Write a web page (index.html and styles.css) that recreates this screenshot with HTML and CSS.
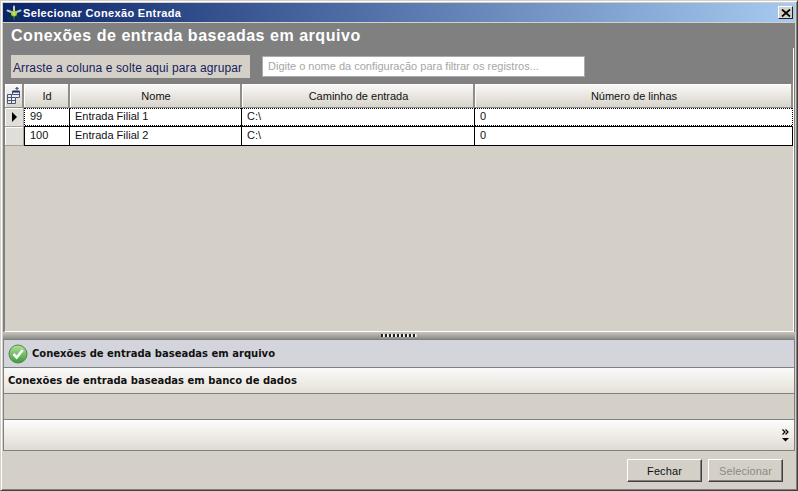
FILE: index.html
```html
<!DOCTYPE html>
<html lang="pt">
<head>
<meta charset="utf-8">
<title>Selecionar Conexão Entrada</title>
<link rel="stylesheet" href="styles.css">
</head>
<body>
<div class="window">
  <div class="titlebar">
    <svg class="app-icon" width="16" height="16" viewBox="0 0 16 16">
      <g stroke-width="2" stroke-linecap="round">
        <path d="M8 8L3 14" stroke="#0d3a3a"/><path d="M8 8L13 14" stroke="#0d3a3a"/>
        <path d="M8 8L1.500 5.500" stroke="#b9c6b8"/><path d="M8 8L14.500 5.500" stroke="#b9c6b8"/>
        <path d="M8 8V1.500" stroke="#c9d3c4"/>
        <path d="M8 8V14" stroke="#1f5a4a"/>
      </g>
      <circle cx="8" cy="8.500" r="3" fill="#9ccc3c"/>
      <circle cx="8" cy="8.500" r="1.500" fill="#c6e85a"/>
    </svg>
    <span class="title-text">Selecionar Conexão Entrada</span>
    <button class="close-btn" aria-label="Fechar">
      <svg width="10" height="8" viewBox="0 0 10 8"><path d="M1 .5L9 7.500M9 .5L1 7.500" fill="none" stroke="#000" stroke-width="1.800"/></svg>
    </button>
  </div>
  <div class="content">
    <div class="grid-panel">
      <div class="panel-head">
        <h1 class="panel-title">Conexões de entrada baseadas em arquivo</h1>
        <div class="tools">
          <div class="group-box">Arraste a coluna e solte aqui para agrupar</div>
          <div class="filter-box">Digite o nome da configuração para filtrar os registros...</div>
        </div>
      </div>
      <div class="grid">
        <div class="row head-row">
          <div class="h-cell c0">
            <svg width="15" height="17" viewBox="0 0 15 17">
              <path d="M1.500 7.500h5v-3h7v6h-4v6h-8z" fill="#e8ebf0" stroke="#4a5672"/>
              <path d="M1.500 10.500h8M1.500 13.500h8M5.500 7.500v9M6.500 7.500h7" fill="none" stroke="#4a5672"/>
              <path d="M6.500 4.500h7" stroke="#1a2a66" stroke-width="2" fill="none"/>
              <path d="M11 3V.5M9.500 2l1.500-1.500L12.500 2" fill="none" stroke="#1a2a66"/>
            </svg>
          </div>
          <div class="h-cell c1">Id</div>
          <div class="h-cell c2">Nome</div>
          <div class="h-cell c3">Caminho de entrada</div>
          <div class="h-cell c4">Número de linhas</div>
        </div>
        <div class="row data-row current">
          <div class="ind c0"><span class="arrow"></span></div>
          <div class="d-cell c1">99</div>
          <div class="d-cell c2">Entrada Filial 1</div>
          <div class="d-cell c3">C:\</div>
          <div class="d-cell c4">0</div>
        </div>
        <div class="row data-row">
          <div class="ind c0"></div>
          <div class="d-cell c1">100</div>
          <div class="d-cell c2">Entrada Filial 2</div>
          <div class="d-cell c3">C:\</div>
          <div class="d-cell c4">0</div>
        </div>
        <div class="grid-empty"></div>
      </div>
    </div>
    <div class="splitter"><span class="grip"></span></div>
    <div class="nav">
      <div class="nav-item selected">
        <svg class="check" width="20" height="20" viewBox="0 0 20 20">
          <defs>
            <linearGradient id="chk" x1="0" y1="0" x2="0" y2="1">
              <stop offset="0" stop-color="#b4e09c"/><stop offset="1" stop-color="#3d9a3a"/>
            </linearGradient>
          </defs>
          <circle cx="10" cy="10" r="9" fill="url(#chk)" stroke="#4d8a48"/>
          <path d="M5.500 10l3.200 3.500 6-7.500" fill="none" stroke="#fff" stroke-width="2.600"/>
        </svg>
        <span>Conexões de entrada baseadas em arquivo</span>
      </div>
      <div class="nav-item plain"><span>Conexões de entrada baseadas em banco de dados</span></div>
      <div class="nav-empty"></div>
      <div class="nav-overflow">
        <span class="chev">
          <svg width="7" height="13" viewBox="0 0 7 13">
            <path d="M0.500 0.500L3 3 .5 5.500M3.500 0.500L6 3 3.500 5.500" fill="none" stroke="#000" stroke-width="1.200"/>
            <path d="M0 9h7l-3.500 3.500z" fill="#000"/>
          </svg>
        </span>
      </div>
    </div>
    <div class="footer">
      <button class="btn">Fechar</button>
      <button class="btn disabled">Selecionar</button>
    </div>
  </div>
</div>
</body>
</html>
```

FILE: styles.css
```css
* { box-sizing: border-box; }
html, body { margin: 0; padding: 0; }
body { width: 798px; height: 491px; overflow: hidden; background: #d4d0c8; font-family: "Liberation Sans", Arial, sans-serif; }

.window {
  width: 798px; height: 491px; display: flex; flex-direction: column;
  background: #d4d0c8;
  border-top: 1px solid #d4d0c8;
  border-left: 1px solid #d4d0c8;
  border-right: 1px solid #404040;
  border-bottom: 1px solid #404040;
  box-shadow: inset 1px 1px 0 #fff, inset -1px -1px 0 #808080;
  padding: 2px 2px 1px 2px;
}

.titlebar {
  height: 19px; flex: none; display: flex; align-items: center;
  padding: 0 2px 0 3px;
  background: linear-gradient(to right, #0a246a, #a6caf0);
}
.app-icon { flex: none; margin-right: 1px; }
.title-text { flex: 1; color: #fff; font: bold 11px "Liberation Sans", Arial, sans-serif; letter-spacing: 0.35px; }
.close-btn {
  width: 15px; height: 13px; padding: 0; display: flex; align-items: center; justify-content: center;
  background: #d4d0c8; border: 1px solid; border-color: #fff #202020 #202020 #fff;
}

.content { flex: 1; display: flex; flex-direction: column; padding-top: 1px; min-height: 0; }

.grid-panel { height: 309px; flex: none; display: flex; flex-direction: column; background: #808080; }
.panel-head {
  height: 61px; flex: none; padding: 3px 0 0 8px;
  background: #808080 linear-gradient(#fff, #fff) no-repeat right 1px bottom / 1px 36px;
}
.panel-title { margin: 0; color: #fff; font: bold 16px/20px "Liberation Sans", Arial, sans-serif; letter-spacing: 0.53px; }
.tools { display: flex; align-items: flex-start; margin-top: 9px; }
.group-box {
  width: 239px; height: 23px; background: #d4d0c8; color: #14205e;
  font-size: 12px; letter-spacing: 0.12px; line-height: 26px; padding-left: 2px; white-space: nowrap;
}
.filter-box {
  width: 323px; height: 21px; margin-left: 12px; margin-top: 1px; background: #fff;
  border: 1px solid #a5acb2; color: #a6a6a6; font-size: 11px; line-height: 19px; padding-left: 5px;
}

.grid {
  flex: 1; display: flex; flex-direction: column; min-height: 0;
  margin: 0 1px 0 1px;
  border-left: 1px solid #808080;
  border-right: 1px solid #fff;
  border-bottom: 1px solid #fff;
}
.row { display: flex; flex: none; }
.c0 { width: 19px; }
.c1 { width: 46px; }
.c2 { width: 172px; }
.c3 { width: 233px; }
.c4 { width: 318px; }

.head-row { height: 24px; }
.h-cell {
  display: flex; align-items: center; justify-content: center;
  font-size: 11px; color: #111; padding-left: 2px;
  background: linear-gradient(to bottom, #fbfafa, #e6e3dd 60%, #d8d5ce);
  border-right: 2px solid #8f8d88;
  border-bottom: 1px solid #8f8d88;
  box-shadow: inset 1px 1px 0 #fff;
}
.h-cell.c0 { padding-left: 0; }

.data-row { height: 19px; }
.ind {
  display: flex; align-items: center; justify-content: center;
  background: #e0ded8;
  border-right: 1px solid #a6a39c; border-bottom: 1px solid #a6a39c;
  box-shadow: inset 1px 1px 0 #fff;
}
.arrow { width: 0; height: 0; border-left: 5px solid #000; border-top: 5px solid transparent; border-bottom: 5px solid transparent; }
.d-cell {
  background: #fff; color: #111; font-size: 11px; line-height: 16px; padding-left: 5px;
  border-right: 1px solid #000; border-bottom: 1px solid #000;
}
.d-cell.c1 { border-left: 1px solid #000; }
.current .d-cell {
  background:
    repeating-linear-gradient(to right, #000 0 1px, #fff 1px 2px) top / 100% 1px no-repeat,
    repeating-linear-gradient(to right, #000 0 1px, #fff 1px 2px) bottom / 100% 1px no-repeat,
    #fff;
}
.current .d-cell.c1 { border-left-style: dotted; }
.current .d-cell.c4 { border-right-style: dotted; }

.grid-empty { flex: 1; background: #d4d0c8; }

.splitter {
  height: 7px; flex: none; display: flex; justify-content: center; align-items: flex-start;
  background: linear-gradient(to bottom, #c8c5be, #8e8c88);
  padding-top: 2px;
}
.grip {
  width: 36px; height: 3px;
  background: repeating-linear-gradient(to right, #222 0, #222 2px, #fff 2px, #fff 3px, #d8d8d8 3px, #d8d8d8 4px);
}

.nav { height: 112px; flex: none; display: flex; flex-direction: column; border: 1px solid #808080; border-top: 0; }
.nav-item {
  display: flex; align-items: center; font-weight: bold; color: #111;
  font-family: "DejaVu Sans", Verdana, sans-serif; font-size: 10px;
  border-top: 1px solid #808080;
  padding-left: 4px; flex: none;
}
.nav-item.selected { height: 28px; background: #d4d5dc; gap: 4px; }
.nav-item.plain { height: 26px; background: linear-gradient(to bottom, #fafafa, #ece9e3 70%, #e2dfd8); }
.check { flex: none; }
.nav-empty { height: 26px; flex: none; background: #d4d0c8; border-top: 1px solid #808080; }
.nav-overflow {
  flex: 1; display: flex; justify-content: flex-end; align-items: flex-end; padding: 0 5px 8px 0;
  background: linear-gradient(to bottom, #fdfdfd, #ece9e3 60%, #dedbd4);
  border-top: 1px solid #808080;
}
.chev { display: block; height: 13px; line-height: 0; }

.footer { flex: 1; display: flex; justify-content: flex-end; align-items: flex-start; gap: 6px; padding: 8px 12px 0 0; }
.btn {
  width: 75px; height: 23px; padding: 0; background: #d4d0c8; color: #111;
  font: 11px "Liberation Sans", Arial, sans-serif; letter-spacing: 0.1px;
  border: 1px solid; border-color: #fff #404040 #404040 #fff;
  box-shadow: inset -1px -1px 0 #808080;
}
.btn.disabled { color: #8c8a86; }
```
